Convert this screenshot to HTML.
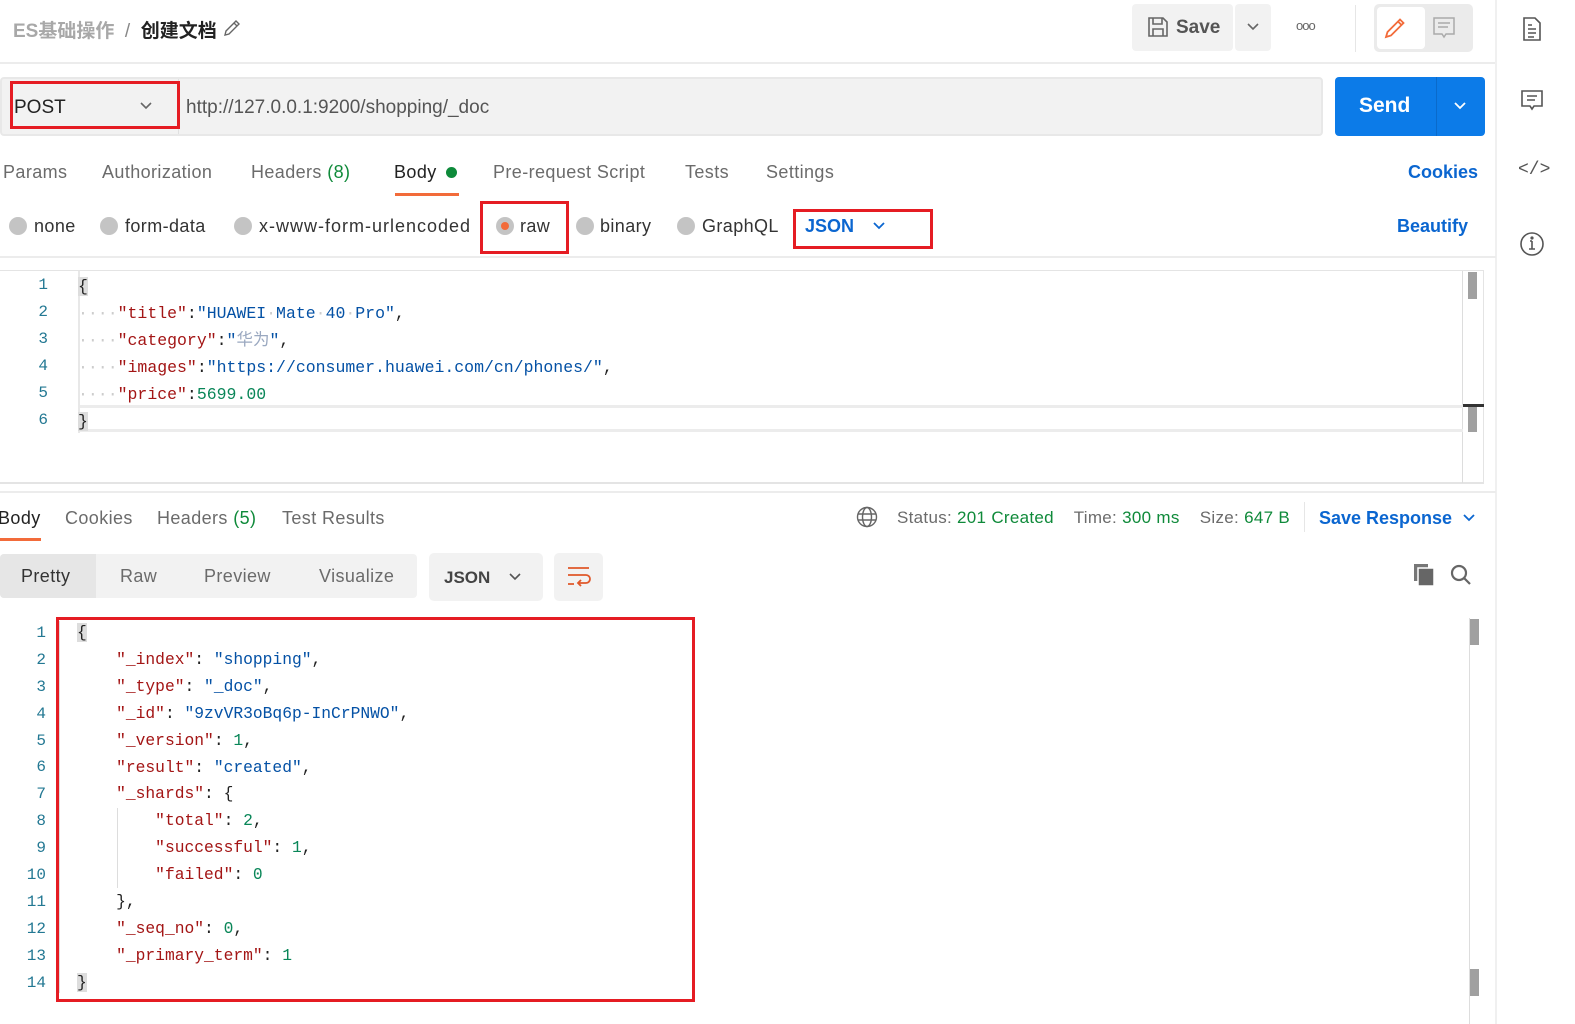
<!DOCTYPE html>
<html><head><meta charset="utf-8"><style>
*{margin:0;padding:0;box-sizing:border-box}
body{width:1575px;height:1024px;background:#fff;position:relative;overflow:hidden;font-family:"Liberation Sans","Noto Sans CJK SC",sans-serif;color:#555}
.a{position:absolute;white-space:nowrap}
.t{font-size:18px;color:#6b6b6b;letter-spacing:.4px}
.mono{font-family:"Liberation Mono","Noto Sans CJK SC",monospace;font-size:16.3px}
.ln{position:absolute;width:48px;text-align:right;color:#237893;font-family:"Liberation Mono",monospace;font-size:16px}
.k{color:#a31515}.s{color:#0451a5}.n{color:#098658}.p{color:#222}
.dot{color:#ccc}
.radio{position:absolute;width:18px;height:18px;border-radius:50%;background:#c4c4c4}
.red{position:absolute;border:3px solid #e51c23}
.g{color:#0f8a3a}
.b{color:#0b66d0}
</style></head><body>

<!-- top bar -->
<div class="a" style="left:13px;top:16px;font-size:19px;font-weight:bold;color:#a8a8a8">ES基础操作 <span style="color:#888;font-weight:normal">&nbsp;/&nbsp;</span> <span style="color:#222">创建文档</span></div>
<svg class="a" style="left:222px;top:18px" width="20" height="20" viewBox="0 0 20 20" fill="none" stroke="#666" stroke-width="1.4"><path d="M3 17l1-4L14 3l3 3L7 16z M12 5l3 3"/></svg>

<div class="a" style="left:1132px;top:4px;width:101px;height:47px;background:#f2f2f2;border-radius:4px"></div>
<svg class="a" style="left:1147px;top:16px" width="22" height="22" viewBox="0 0 22 22" fill="none" stroke="#666" stroke-width="1.6"><path d="M2 2h14l4 4v14H2z M6 2v6h9V2 M6 20v-7h10v7"/></svg>
<div class="a" style="left:1176px;top:17px;font-size:19px;font-weight:bold;color:#555">Save</div>
<div class="a" style="left:1235px;top:4px;width:36px;height:47px;background:#f2f2f2;border-radius:4px"></div>
<svg class="a" style="left:1246px;top:22px" width="14" height="10" viewBox="0 0 14 10" fill="none" stroke="#666" stroke-width="1.6"><path d="M2 2l5 5 5-5"/></svg>
<div class="a" style="left:1296px;top:18px;font-size:13px;color:#666;letter-spacing:-1px">ooo</div>
<div class="a" style="left:1355px;top:5px;width:1px;height:47px;background:#e6e6e6"></div>
<div class="a" style="left:1374px;top:4px;width:99px;height:48px;background:#ebebeb;border-radius:5px"></div>
<div class="a" style="left:1377px;top:7px;width:48px;height:42px;background:#fff;border-radius:4px"></div>
<svg class="a" style="left:1383px;top:16px" width="24" height="24" viewBox="0 0 24 24" fill="none" stroke="#f26b3a" stroke-width="1.8"><path d="M3 21l1.5-5L17 3.5l3.5 3.5L8 19.5z M15 5.5l3.5 3.5"/></svg>
<svg class="a" style="left:1432px;top:16px" width="24" height="24" viewBox="0 0 24 24" fill="none" stroke="#aaa" stroke-width="1.5"><path d="M2 2h20v16H14l-2 3-2-3H2z M6 7h12 M6 11h10"/></svg>
<div class="a" style="left:0;top:62px;width:1496px;height:2px;background:#ececec"></div>

<!-- right sidebar -->
<div class="a" style="left:1495px;top:0;width:2px;height:1024px;background:#f0f0f0"></div>
<svg class="a" style="left:1522px;top:16px" width="20" height="26" viewBox="0 0 20 26" fill="none" stroke="#555" stroke-width="1.6"><path d="M2 2h11l5 5v17H2z M6 9h4 M6 13h8 M6 17h8 M6 21h6"/></svg>
<svg class="a" style="left:1520px;top:88px" width="24" height="24" viewBox="0 0 24 24" fill="none" stroke="#555" stroke-width="1.6"><path d="M2 3h20v15H14l-2 3-2-3H2z M7 8h10 M7 12h8"/></svg>
<div class="a" style="left:1518px;top:160px;font-size:18px;color:#555;font-family:'Liberation Mono',monospace">&lt;/&gt;</div>
<svg class="a" style="left:1519px;top:231px" width="26" height="26" viewBox="0 0 26 26" fill="none" stroke="#555" stroke-width="1.6"><circle cx="13" cy="13" r="11"/><path d="M13 10v8 M10 18h6 M11 10h2"/><circle cx="13" cy="7" r=".8" fill="#555"/></svg>

<!-- URL row -->
<div class="a" style="left:0;top:77px;width:1323px;height:59px;background:#f2f2f2;border:2px solid #e8e8e8;border-radius:4px"></div>
<div class="a" style="left:178px;top:79px;width:1px;height:55px;background:#e0e0e0"></div>
<div class="red" style="left:10px;top:81px;width:170px;height:48px"></div>
<div class="a" style="left:14px;top:97px;font-size:19px;color:#222">POST</div>
<svg class="a" style="left:139px;top:101px" width="14" height="10" viewBox="0 0 14 10" fill="none" stroke="#666" stroke-width="1.6"><path d="M2 2l5 5 5-5"/></svg>
<div class="a" style="left:186px;top:97px;font-size:19px;color:#555">http://127.0.0.1:9200/shopping/_doc</div>
<div class="a" style="left:1335px;top:77px;width:150px;height:59px;background:#0c7be8;border-radius:4px"></div>
<div class="a" style="left:1436px;top:77px;width:1px;height:59px;background:#0a6acb"></div>
<div class="a" style="left:1359px;top:94px;font-size:21px;font-weight:bold;color:#fff">Send</div>
<svg class="a" style="left:1453px;top:101px" width="14" height="10" viewBox="0 0 14 10" fill="none" stroke="#fff" stroke-width="1.8"><path d="M2 2l5 5 5-5"/></svg>

<!-- tabs -->
<div class="a t" style="left:3px;top:162px">Params</div>
<div class="a t" style="left:102px;top:162px">Authorization</div>
<div class="a t" style="left:251px;top:162px">Headers <span class="g">(8)</span></div>
<div class="a t" style="left:394px;top:162px;color:#222">Body</div>
<div class="a" style="left:446px;top:167px;width:11px;height:11px;border-radius:50%;background:#0d8a3a"></div>
<div class="a" style="left:395px;top:193px;width:64px;height:3px;background:#f26b3a"></div>
<div class="a t" style="left:493px;top:162px">Pre-request Script</div>
<div class="a t" style="left:685px;top:162px">Tests</div>
<div class="a t" style="left:766px;top:162px">Settings</div>
<div class="a" style="left:1408px;top:162px;font-size:18px;font-weight:bold;color:#0b66d0">Cookies</div>

<!-- radios -->
<div class="radio" style="left:9px;top:217px"></div><div class="a t" style="left:34px;top:216px;color:#333">none</div>
<div class="radio" style="left:100px;top:217px"></div><div class="a t" style="left:125px;top:216px;color:#333">form-data</div>
<div class="radio" style="left:234px;top:217px"></div><div class="a t" style="left:259px;top:216px;color:#333;letter-spacing:1px">x-www-form-urlencoded</div>
<div class="red" style="left:480px;top:201px;width:89px;height:53px"></div>
<div class="radio" style="left:496px;top:217px"></div><div class="a" style="left:501px;top:222px;width:8px;height:8px;border-radius:50%;background:#f26b3a"></div>
<div class="a t" style="left:520px;top:216px;color:#333">raw</div>
<div class="radio" style="left:576px;top:217px"></div><div class="a t" style="left:600px;top:216px;color:#333">binary</div>
<div class="radio" style="left:677px;top:217px"></div><div class="a t" style="left:702px;top:216px;color:#333">GraphQL</div>
<div class="red" style="left:793px;top:209px;width:140px;height:40px"></div>
<div class="a" style="left:805px;top:216px;font-size:18px;font-weight:bold;color:#0b66d0">JSON</div>
<svg class="a" style="left:872px;top:221px" width="14" height="10" viewBox="0 0 14 10" fill="none" stroke="#0b66d0" stroke-width="1.8"><path d="M2 2l5 5 5-5"/></svg>
<div class="a" style="left:1397px;top:216px;font-size:18px;font-weight:bold;color:#0b66d0">Beautify</div>
<div class="a" style="left:0;top:256px;width:1496px;height:2px;background:#ececec"></div>

<!-- request editor -->
<div class="a" style="left:0;top:270px;width:1484px;height:214px;border-top:1px solid #e4e4e4;border-bottom:2px solid #e4e4e4;border-right:1px solid #e4e4e4"></div>
<div class="a" style="left:1462px;top:271px;width:1px;height:212px;background:#ddd"></div>
<div class="a" style="left:1468px;top:272px;width:9px;height:27px;background:#a0a0a0"></div>
<div class="a" style="left:1463px;top:404px;width:21px;height:3px;background:#333"></div>
<div class="a" style="left:1468px;top:407px;width:9px;height:25px;background:#a0a0a0"></div>
<div class="a" style="left:78px;top:405px;width:1385px;height:27px;border-top:3px solid #ececec;border-bottom:3px solid #ececec"></div>
<div class="a" style="left:78px;top:271px;width:2px;height:162px;background:#e8e8e8"></div>
<div class="ln" style="left:0;top:276px">1</div>
<div class="ln" style="left:0;top:303px">2</div>
<div class="ln" style="left:0;top:330px">3</div>
<div class="ln" style="left:0;top:357px">4</div>
<div class="ln" style="left:0;top:384px">5</div>
<div class="ln" style="left:0;top:411px">6</div>
<div class="a mono" style="left:78px;top:273px;line-height:27px;font-size:16.5px">
<div><span class="p" style="background:#ddd">{</span></div>
<div><span class="dot">····</span><span class="k">"title"</span><span class="p">:</span><span class="s">"HUAWEI<span class="dot">·</span>Mate<span class="dot">·</span>40<span class="dot">·</span>Pro"</span><span class="p">,</span></div>
<div><span class="dot">····</span><span class="k">"category"</span><span class="p">:</span><span class="s">"<span style="color:#9aa8c0">华为</span>"</span><span class="p">,</span></div>
<div><span class="dot">····</span><span class="k">"images"</span><span class="p">:</span><span class="s">"https://consumer.huawei.com/cn/phones/"</span><span class="p">,</span></div>
<div><span class="dot">····</span><span class="k">"price"</span><span class="p">:</span><span class="n">5699.00</span></div>
<div><span class="p" style="background:#ddd">}</span></div>
</div>

<div class="a" style="left:0;top:491px;width:1496px;height:2px;background:#ececec"></div>

<!-- response tabs -->
<div class="a t" style="left:-2px;top:508px;color:#222">Body</div>
<div class="a" style="left:0;top:538px;width:41px;height:3px;background:#f26b3a"></div>
<div class="a t" style="left:65px;top:508px">Cookies</div>
<div class="a t" style="left:157px;top:508px">Headers <span class="g">(5)</span></div>
<div class="a t" style="left:282px;top:508px">Test Results</div>
<svg class="a" style="left:856px;top:506px" width="22" height="22" viewBox="0 0 22 22" fill="none" stroke="#666" stroke-width="1.4"><circle cx="11" cy="11" r="9.5"/><ellipse cx="11" cy="11" rx="4.5" ry="9.5"/><path d="M2 8h18 M2 14h18"/></svg>
<div class="a" style="left:897px;top:508px;font-size:17px;color:#6b6b6b;letter-spacing:.3px">Status: <span class="g">201 Created</span>&nbsp;&nbsp;&nbsp; Time: <span class="g">300 ms</span>&nbsp;&nbsp;&nbsp; Size: <span class="g">647 B</span></div>
<div class="a" style="left:1304px;top:502px;width:1px;height:30px;background:#e6e6e6"></div>
<div class="a" style="left:1319px;top:508px;font-size:18px;font-weight:bold;color:#0b66d0">Save Response</div>
<svg class="a" style="left:1462px;top:513px" width="14" height="10" viewBox="0 0 14 10" fill="none" stroke="#0b66d0" stroke-width="1.8"><path d="M2 2l5 5 5-5"/></svg>

<!-- response toolbar -->
<div class="a" style="left:0;top:554px;width:417px;height:44px;background:#f2f2f2;border-radius:4px"></div>
<div class="a" style="left:0;top:554px;width:96px;height:44px;background:#e6e6e6;border-radius:4px 0 0 4px"></div>
<div class="a t" style="left:21px;top:566px;color:#333">Pretty</div>
<div class="a t" style="left:120px;top:566px">Raw</div>
<div class="a t" style="left:204px;top:566px">Preview</div>
<div class="a t" style="left:319px;top:566px">Visualize</div>
<div class="a" style="left:429px;top:553px;width:114px;height:48px;background:#f2f2f2;border-radius:5px"></div>
<div class="a" style="left:444px;top:568px;font-size:17px;font-weight:bold;color:#444">JSON</div>
<svg class="a" style="left:508px;top:572px" width="14" height="10" viewBox="0 0 14 10" fill="none" stroke="#555" stroke-width="1.6"><path d="M2 2l5 5 5-5"/></svg>
<div class="a" style="left:554px;top:553px;width:49px;height:48px;background:#f2f2f2;border-radius:5px"></div>
<svg class="a" style="left:566px;top:566px" width="26" height="22" viewBox="0 0 26 22" fill="none" stroke="#e0582a" stroke-width="1.8"><path d="M2 2h21 M2 9h18a4 4 0 0 1 0 8h-7 M15 14l-3 3 3 3 M2 18h6"/></svg>
<svg class="a" style="left:1413px;top:563px" width="24" height="24" viewBox="0 0 24 24"><rect x="1" y="1" width="14" height="17" fill="#777"/><rect x="5" y="5" width="16" height="18" fill="#666" stroke="#fff" stroke-width="1.5"/></svg>
<svg class="a" style="left:1449px;top:563px" width="24" height="24" viewBox="0 0 24 24" fill="none" stroke="#666" stroke-width="2.2"><circle cx="10" cy="10" r="7"/><path d="M15 15l6 6"/></svg>

<!-- response editor -->
<div class="a" style="left:1469px;top:618px;width:1px;height:406px;background:#ddd"></div>
<div class="a" style="left:1470px;top:619px;width:9px;height:26px;background:#a0a0a0"></div>
<div class="a" style="left:1470px;top:969px;width:9px;height:27px;background:#a0a0a0"></div>
<div class="a" style="left:58px;top:621px;width:2px;height:372px;background:#ddd"></div>
<div class="a" style="left:117px;top:808px;width:1px;height:80px;background:#ddd"></div>
<div class="red" style="left:56px;top:617px;width:639px;height:385px"></div>
<div class="a" style="left:0;top:620px;line-height:26.9px">
<div class="ln" style="position:static;width:46px;height:26.9px">1</div>
<div class="ln" style="position:static;width:46px;height:26.9px">2</div>
<div class="ln" style="position:static;width:46px;height:26.9px">3</div>
<div class="ln" style="position:static;width:46px;height:26.9px">4</div>
<div class="ln" style="position:static;width:46px;height:26.9px">5</div>
<div class="ln" style="position:static;width:46px;height:26.9px">6</div>
<div class="ln" style="position:static;width:46px;height:26.9px">7</div>
<div class="ln" style="position:static;width:46px;height:26.9px">8</div>
<div class="ln" style="position:static;width:46px;height:26.9px">9</div>
<div class="ln" style="position:static;width:46px;height:26.9px">10</div>
<div class="ln" style="position:static;width:46px;height:26.9px">11</div>
<div class="ln" style="position:static;width:46px;height:26.9px">12</div>
<div class="ln" style="position:static;width:46px;height:26.9px">13</div>
<div class="ln" style="position:static;width:46px;height:26.9px">14</div>
</div>
<div class="a mono" style="left:77px;top:620px;line-height:26.9px;white-space:pre"><span class="p" style="background:#ddd">{</span>
    <span class="k">"_index"</span><span class="p">: </span><span class="s">"shopping"</span><span class="p">,</span>
    <span class="k">"_type"</span><span class="p">: </span><span class="s">"_doc"</span><span class="p">,</span>
    <span class="k">"_id"</span><span class="p">: </span><span class="s">"9zvVR3oBq6p-InCrPNWO"</span><span class="p">,</span>
    <span class="k">"_version"</span><span class="p">: </span><span class="n">1</span><span class="p">,</span>
    <span class="k">"result"</span><span class="p">: </span><span class="s">"created"</span><span class="p">,</span>
    <span class="k">"_shards"</span><span class="p">: {</span>
        <span class="k">"total"</span><span class="p">: </span><span class="n">2</span><span class="p">,</span>
        <span class="k">"successful"</span><span class="p">: </span><span class="n">1</span><span class="p">,</span>
        <span class="k">"failed"</span><span class="p">: </span><span class="n">0</span>
    <span class="p">},</span>
    <span class="k">"_seq_no"</span><span class="p">: </span><span class="n">0</span><span class="p">,</span>
    <span class="k">"_primary_term"</span><span class="p">: </span><span class="n">1</span>
<span class="p" style="background:#ddd">}</span></div>

</body></html>
